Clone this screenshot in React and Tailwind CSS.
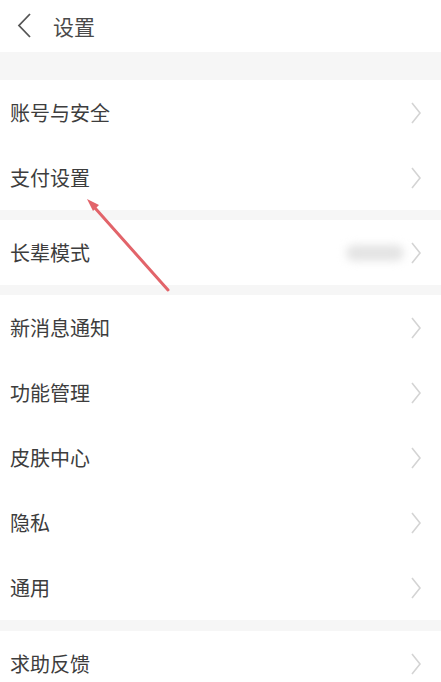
import { Fragment } from "react";

const groups = [
  ["账号与安全", "支付设置"],
  ["长辈模式"],
  ["新消息通知", "功能管理", "皮肤中心", "隐私", "通用"],
  ["求助反馈"],
];

function Chevron() {
  return (
    <svg width="12" height="24" viewBox="0 0 12 24" className="shrink-0">
      <path d="M2 2 L10 12 L2 22" fill="none" stroke="#d4d4d4" strokeWidth="1.6" />
    </svg>
  );
}

function Row({ label }) {
  return (
    <div className="h-[65px] flex items-center justify-between pl-[10px] pr-[19px] bg-white">
      <span className="text-[20px] text-[#3d3d3d] leading-none">{label}</span>
      <div className="flex items-center gap-[6px]">
        {label === "长辈模式" && (
          <div className="w-[58px] h-[16px] rounded-full bg-[#e4e4e4] blur-[4px]" />
        )}
        <Chevron />
      </div>
    </div>
  );
}

export default function App() {
  return (
    <div
      className="relative w-[441px] h-[682px] overflow-hidden bg-[#f6f6f6]"
      style={{ fontFamily: '"Noto Sans CJK SC", "Noto Sans", sans-serif' }}
    >
      {/* Header */}
      <div className="h-[52px] bg-white flex items-center">
        <svg width="20" height="28" viewBox="0 0 20 28" className="ml-[15px]">
          <path d="M15 2 L4 13.5 L15 25" fill="none" stroke="#555" strokeWidth="1.8" />
        </svg>
        <span className="ml-[18px] text-[21px] text-[#4a4a4a] leading-none">设置</span>
      </div>

      <div className="h-[28px]" />

      {groups.map((g, i) => (
        <Fragment key={i}>
          {i > 0 && <div className={i === 3 ? "h-[11px]" : "h-[10px]"} />}
          <div className="bg-white">
            {g.map((label) => (
              <Row key={label} label={label} />
            ))}
          </div>
        </Fragment>
      ))}

      {/* annotation arrow */}
      <svg
        className="absolute left-0 top-0 pointer-events-none"
        width="441"
        height="682"
        viewBox="0 0 441 682"
      >
        <line x1="168" y1="290" x2="95" y2="208" stroke="#e2646a" strokeWidth="3" strokeLinecap="round" />
        <polygon points="87,199 99,205 93,211" fill="#e2646a" />
      </svg>
    </div>
  );
}
